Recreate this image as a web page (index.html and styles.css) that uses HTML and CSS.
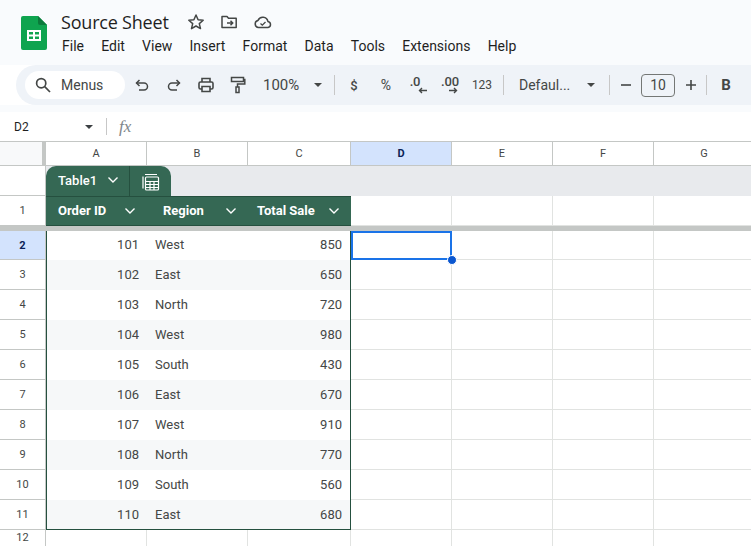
FILE: index.html
```html
<!DOCTYPE html>
<html lang="en">
<head>
  <meta charset="UTF-8" />
  <title>Source Sheet</title>
  <link rel="stylesheet" href="styles.css">
</head>
<body>
  <div class="app">
    <header class="topbar">
      <svg class="logo" width="26" height="34" viewBox="0 0 26 34">
        <path d="M2 0H17L26 9V32a2 2 0 0 1-2 2H2a2 2 0 0 1-2-2V2a2 2 0 0 1 2-2z" fill="#0fa44f"/>
        <path d="M17 0L26 9H19a2 2 0 0 1-2-2z" fill="#0b7a3b"/>
        <path d="M6 14H20V25H6zM8 16V18.6H12V16zM14 16V18.6H18V16zM8 20.4V23H12V20.4zM14 20.4V23H18V20.4z" fill="#fff" fill-rule="evenodd"/>
      </svg>
      <div class="title-wrap">
        <div class="title-row">
          <span class="doc-title">Source Sheet</span>
          <svg class="title-icon first" width="18" height="18" viewBox="0 0 18 18" fill="none" stroke="#444746" stroke-width="1.5" stroke-linejoin="round"><path d="M9 2l2.100 4.700 5.100.5-3.900 3.400 1.200 5L9 13l-4.500 2.600 1.200-5-3.900-3.400 5.100-.5z"/></svg>
          <svg class="title-icon" width="18" height="18" viewBox="0 0 18 18" fill="none" stroke="#444746" stroke-width="1.5"><path d="M2 14.500V3.500h5l1.500 1.800H16.200V14.500z" stroke-linejoin="round"/><path d="M7 10h5.500M10.500 7.800L12.700 10l-2.200 2.200"/></svg>
          <svg class="title-icon" width="20" height="18" viewBox="0 0 20 18" fill="none" stroke="#444746" stroke-width="1.5"><path d="M5.500 14.500a3.600 3.600 0 0 1-.5-7.100 5.200 5.200 0 0 1 9.900 1 3.100 3.100 0 0 1 .1 6.100z" stroke-linejoin="round"/><path d="M7.500 10.500l1.800 1.700 3.200-3.200" stroke-width="1.300"/></svg>
        </div>
        <nav class="menu">
          <span>File</span><span>Edit</span><span>View</span><span>Insert</span><span>Format</span><span>Data</span><span>Tools</span><span>Extensions</span><span>Help</span>
        </nav>
      </div>
    </header>

    <div class="toolbar">
      <div class="search">
        <svg width="18" height="18" viewBox="0 0 18 18" fill="none" stroke="#444746" stroke-width="1.7"><circle cx="7.200" cy="7.200" r="4.600"/><path d="M10.700 10.700L16 16"/></svg>
        <span>Menus</span>
      </div>
      <div class="tool"><svg width="16" height="16" viewBox="0 0 16 16" fill="none" stroke="#444746" stroke-width="1.500"><path d="M5.500 3L2.500 6l3 3"/><path d="M2.500 6H10a3.500 3.500 0 0 1 0 7H5"/></svg></div>
      <div class="tool"><svg width="16" height="16" viewBox="0 0 16 16" fill="none" stroke="#444746" stroke-width="1.500"><path d="M10.500 3l3 3-3 3"/><path d="M13.500 6H6a3.500 3.500 0 0 0 0 7h5"/></svg></div>
      <div class="tool"><svg width="18" height="18" viewBox="0 0 18 18" fill="none" stroke="#444746" stroke-width="1.600"><path d="M5 6V2.500h8V6"/><rect x="2" y="6" width="14" height="7" rx="1.500"/><path d="M5 10.500h8V15.500H5z" fill="#eff3f8"/></svg></div>
      <div class="tool"><svg width="16" height="18" viewBox="0 0 16 18" fill="none" stroke="#444746" stroke-width="1.500"><rect x="1.500" y="1.500" width="12" height="4"/><path d="M13.500 3.500h1.300V8H7.500v3"/><rect x="6" y="11" width="3" height="5.500"/></svg></div>
      <div class="zoom-select"><span>100%</span><i class="caret"></i></div>
      <i class="sep after-zoom"></i>
      <div class="tool small">$</div>
      <div class="tool percent">%</div>
      <div class="tool dec less"><span>.0</span><svg width="9" height="7" viewBox="0 0 9 7" fill="none" stroke="#444746" stroke-width="1.400"><path d="M9 3.500H1.500M4 1L1.500 3.500 4 6"/></svg></div>
      <div class="tool dec"><span>.00</span><svg width="9" height="7" viewBox="0 0 9 7" fill="none" stroke="#444746" stroke-width="1.400"><path d="M0 3.500h7.500M5 1l2.500 2.500L5 6"/></svg></div>
      <div class="tool fmt">123</div>
      <i class="sep after-fmt"></i>
      <div class="font-select"><span>Defaul...</span><i class="caret"></i></div>
      <i class="sep after-font"></i>
      <div class="tool step"><svg width="12" height="12" viewBox="0 0 12 12" stroke="#444746" stroke-width="1.600"><path d="M1 6h10"/></svg></div>
      <div class="size-box">10</div>
      <div class="tool step"><svg width="12" height="12" viewBox="0 0 12 12" stroke="#444746" stroke-width="1.600"><path d="M1 6h10M6 1v10"/></svg></div>
      <i class="sep after-size"></i>
      <div class="tool bold">B</div>
    </div>

    <div class="formula-bar">
      <div class="name-box"><span>D2</span><i class="caret dark"></i></div>
      <i class="sep"></i>
      <span class="fx">fx</span>
    </div>

    <div class="sheet">
      <div class="corner"></div>
      <div class="col-head">A</div>
      <div class="col-head">B</div>
      <div class="col-head">C</div>
      <div class="col-head active">D</div>
      <div class="col-head">E</div>
      <div class="col-head">F</div>
      <div class="col-head">G</div>

      <div class="row-head band-head"></div>
      <div class="band">
        <div class="table-tab">
          <div class="tab-name"><span>Table1</span><svg class="chev" width="12" height="8" viewBox="0 0 12 8" fill="none" stroke="#fff" stroke-width="1.400"><path d="M1.500 1.500L6 6l4.500-4.500"/></svg></div>
          <div class="tab-calc">
            <svg width="18" height="18" viewBox="0 0 18 18" fill="none" stroke="#fff" stroke-width="1.200"><path d="M1 15.500V3.500M3 1.500H15"/><rect x="3.500" y="4" width="13" height="13" rx="1"/><path d="M3.500 8.500h13M3.500 11.500h13M3.500 14.500h13M8 8.500V17M12 8.500V17"/></svg>
          </div>
        </div>
      </div>

      <div class="row-head">1</div>
      <div class="th"><span>Order ID</span><svg class="chev" width="12" height="8" viewBox="0 0 12 8" fill="none" stroke="#fff" stroke-width="1.400"><path d="M1.500 1.500L6 6l4.500-4.500"/></svg></div>
      <div class="th region"><span>Region</span><svg class="chev" width="12" height="8" viewBox="0 0 12 8" fill="none" stroke="#fff" stroke-width="1.400"><path d="M1.500 1.500L6 6l4.500-4.500"/></svg></div>
      <div class="th total"><span>Total Sale</span><svg class="chev" width="12" height="8" viewBox="0 0 12 8" fill="none" stroke="#fff" stroke-width="1.400"><path d="M1.500 1.500L6 6l4.500-4.500"/></svg></div>
      <div class="cell"></div><div class="cell"></div><div class="cell"></div><div class="cell"></div>

      <div class="freeze"></div>

      <div class="row-head active">2</div>
      <div class="td num first-col top">101</div><div class="td top">West</div><div class="td num last-col top">850</div>
      <div class="cell selected"><i class="handle"></i></div><div class="cell"></div><div class="cell"></div><div class="cell"></div>

      <div class="row-head">3</div>
      <div class="td num first-col alt">102</div><div class="td alt">East</div><div class="td num last-col alt">650</div>
      <div class="cell"></div><div class="cell"></div><div class="cell"></div><div class="cell"></div>

      <div class="row-head">4</div>
      <div class="td num first-col">103</div><div class="td">North</div><div class="td num last-col">720</div>
      <div class="cell"></div><div class="cell"></div><div class="cell"></div><div class="cell"></div>

      <div class="row-head">5</div>
      <div class="td num first-col alt">104</div><div class="td alt">West</div><div class="td num last-col alt">980</div>
      <div class="cell"></div><div class="cell"></div><div class="cell"></div><div class="cell"></div>

      <div class="row-head">6</div>
      <div class="td num first-col">105</div><div class="td">South</div><div class="td num last-col">430</div>
      <div class="cell"></div><div class="cell"></div><div class="cell"></div><div class="cell"></div>

      <div class="row-head">7</div>
      <div class="td num first-col alt">106</div><div class="td alt">East</div><div class="td num last-col alt">670</div>
      <div class="cell"></div><div class="cell"></div><div class="cell"></div><div class="cell"></div>

      <div class="row-head">8</div>
      <div class="td num first-col">107</div><div class="td">West</div><div class="td num last-col">910</div>
      <div class="cell"></div><div class="cell"></div><div class="cell"></div><div class="cell"></div>

      <div class="row-head">9</div>
      <div class="td num first-col alt">108</div><div class="td alt">North</div><div class="td num last-col alt">770</div>
      <div class="cell"></div><div class="cell"></div><div class="cell"></div><div class="cell"></div>

      <div class="row-head">10</div>
      <div class="td num first-col">109</div><div class="td">South</div><div class="td num last-col">560</div>
      <div class="cell"></div><div class="cell"></div><div class="cell"></div><div class="cell"></div>

      <div class="row-head">11</div>
      <div class="td num first-col alt end">110</div><div class="td alt end">East</div><div class="td num last-col alt end">680</div>
      <div class="cell"></div><div class="cell"></div><div class="cell"></div><div class="cell"></div>

      <div class="row-head last-row">12</div>
      <div class="cell"></div><div class="cell"></div><div class="cell"></div>
      <div class="cell"></div><div class="cell"></div><div class="cell"></div><div class="cell"></div>
    </div>
  </div>
</body>
</html>
```

FILE: styles.css
```css
* {
  box-sizing: border-box;
}
html, body {
  margin: 0;
  height: 100%;
  overflow: hidden;
}
body {
  font-family: Roboto, "Liberation Sans", sans-serif;
  color: #444746;
  background: #fff;
}
.app {
  width: 751px;
  height: 546px;
  overflow: hidden;
}
.topbar {
  display: flex;
  height: 65px;
  padding: 16px 0 0 21px;
  background: #f9fbfd;
}
.logo {
  flex: none;
}
.title-wrap {
  margin: -5px 0 0 14px;
}
.title-row {
  display: flex;
  align-items: center;
  height: 24px;
  margin-top: -1px;
}
.doc-title {
  font-family: "Open Sans", Roboto, sans-serif;
  font-size: 18px;
  color: #1f1f1f;
  letter-spacing: -0.2px;
}
.title-icon {
  margin-left: 15px;
}
.title-icon.first {
  margin-left: 18px;
}
.menu {
  display: flex;
  gap: 17.2px;
  margin: 3px 0 0 1px;
  font-size: 14px;
  line-height: 18px;
  color: #1f1f1f;
}
.toolbar {
  display: flex;
  align-items: center;
  height: 40px;
  margin-left: 16px;
  padding-left: 9px;
  background: #eff3f8;
  border-radius: 20px 0 0 20px;
  white-space: nowrap;
}
.search {
  display: flex;
  align-items: center;
  flex: none;
  gap: 9px;
  width: 100px;
  height: 28px;
  padding-left: 9px;
  margin-right: 1px;
  background: #fff;
  border-radius: 14px;
  font-size: 14px;
}
.tool {
  display: flex;
  align-items: center;
  justify-content: center;
  flex: none;
  width: 32px;
  height: 28px;
  font-size: 13px;
}
.tool.small {
  font-size: 13px;
  font-weight: 500;
}
.tool.percent {
  font-size: 14px;
}
.tool.dec {
  flex-direction: column;
  font-size: 13px;
  font-weight: 500;
  line-height: 12px;
  letter-spacing: -0.2px;
}
.tool.dec svg {
  margin: -1px 0 0 7px;
}
.tool.dec.less span {
  margin-right: 6px;
}
.tool.dec.less svg {
  margin-left: 8px;
}
.tool.fmt {
  font-size: 12px;
}
.tool.step {
  width: 31px;
}
.tool.bold {
  font-size: 15px;
  font-weight: 700;
}
.caret {
  display: inline-block;
  width: 0;
  height: 0;
  border-left: 4.5px solid transparent;
  border-right: 4.5px solid transparent;
  border-top: 4.5px solid #444746;
}
.caret.dark {
  border-top-color: #3c4043;
}
.zoom-select {
  display: flex;
  align-items: center;
  justify-content: space-between;
  flex: none;
  width: 59px;
  margin-left: 9px;
  font-size: 15px;
}
.font-select {
  display: flex;
  align-items: center;
  justify-content: space-between;
  flex: none;
  width: 76px;
  margin-left: 15px;
  font-size: 14px;
}
.sep {
  display: block;
  flex: none;
  width: 1px;
  height: 20px;
  background: #c7c7c7;
}
.after-zoom {
  margin: 0 3px 0 12px;
}
.after-fmt {
  margin-left: 5px;
}
.after-font {
  margin-left: 14px;
}
.after-size {
  margin-right: 3px;
}
.size-box {
  flex: none;
  width: 34px;
  height: 23px;
  border: 1px solid #747775;
  border-radius: 4px;
  font-size: 14px;
  line-height: 21px;
  text-align: center;
}
.formula-bar {
  display: flex;
  align-items: center;
  height: 37px;
  background: #fff;
  border-top: 7px solid #f9fbfd;
  border-bottom: 1px solid #c4c7c5;
}
.name-box {
  display: flex;
  align-items: center;
  justify-content: space-between;
  width: 93px;
  padding-left: 14px;
  font-size: 12px;
  color: #1f1f1f;
}
.formula-bar .sep {
  height: 17px;
  margin: 0 0 0 13px;
}
.fx {
  margin-left: 12px;
  font-family: "Liberation Serif", serif;
  font-style: italic;
  font-size: 17px;
  color: #80868b;
}
.sheet {
  display: grid;
  grid-template-columns: 46px 101px 101px 103px 101px 101px 101px 101px;
  grid-template-rows: 24px 30px 30px 5px 29px repeat(9, 30px) 24px;
  font-size: 12px;
}
.corner {
  background: #f8f9fa;
  border-right: 4px solid #c4c7c5;
  border-bottom: 1px solid #c4c7c5;
}
.col-head,
.row-head {
  display: flex;
  align-items: center;
  justify-content: center;
  border-right: 1px solid #c4c7c5;
  border-bottom: 1px solid #c4c7c5;
  font-size: 11px;
  color: #444746;
}
.row-head.last-row {
  padding-bottom: 8px;
}
.col-head.active,
.row-head.active {
  background: #d3e3fd;
  color: #0b1f57;
  font-weight: 700;
}
.band {
  grid-column: 2 / -1;
  background: #e8eaed;
}
.table-tab {
  display: flex;
  width: 125px;
  height: 100%;
  background: #356854;
  border-radius: 10px 10px 0 0;
  color: #fff;
}
.tab-name {
  display: flex;
  align-items: center;
  justify-content: space-between;
  width: 84px;
  padding: 0 10px 2px 12px;
  border-right: 1px solid #25503f;
  font-size: 13px;
  font-weight: 500;
}
.tab-calc {
  display: flex;
  align-items: center;
  justify-content: center;
  flex: 1;
  padding-top: 1px;
}
.th {
  display: flex;
  align-items: center;
  justify-content: space-between;
  padding: 0 11px 1px 12px;
  background: #356854;
  border-top: 1px solid #25503f;
  border-bottom: 1px solid #25503f;
  color: #fff;
  font-size: 13px;
  font-weight: 700;
  white-space: nowrap;
}
.th.region {
  padding-left: 16px;
}
.th.total {
  padding-left: 9px;
}
.cell {
  position: relative;
  border-right: 1px solid #e1e3e1;
  border-bottom: 1px solid #e1e3e1;
}
.td {
  display: flex;
  align-items: center;
  padding: 0 8px 1px;
  font-size: 13px;
  color: #444746;
}
.td.num {
  justify-content: flex-end;
}
.td.top {
  padding-bottom: 2px;
}
.td.alt {
  background: #f6f8f9;
}
.first-col {
  border-left: 1px solid #25503f;
}
.last-col {
  border-right: 1px solid #25503f;
}
.td.end {
  border-bottom: 1px solid #25503f;
}
.freeze {
  grid-column: 1 / -1;
  background: #c4c7c5;
}
.selected {
  border: 2px solid #1a73e8;
}
.handle {
  position: absolute;
  right: -7px;
  bottom: -7px;
  width: 10px;
  height: 10px;
  background: #0b57d0;
  border: 1px solid #fff;
  border-radius: 50%;
  z-index: 2;
}
```
